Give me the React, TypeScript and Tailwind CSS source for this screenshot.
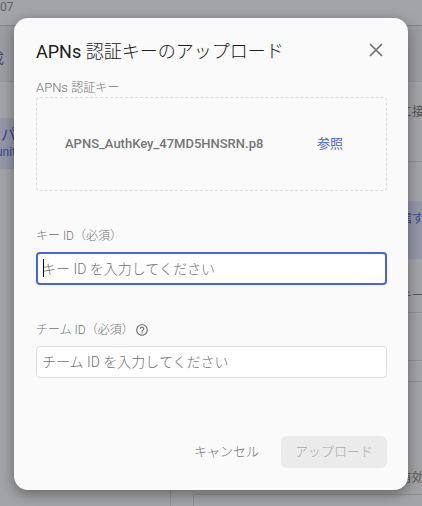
import { useState } from "react";

const input =
  "block w-full rounded-sm bg-white text-sm font-light text-[#202020] placeholder:text-[#707070] focus:outline-none";

function ConsolePage() {
  return (
    <div aria-hidden="true" className="flex h-screen flex-col overflow-hidden whitespace-nowrap bg-[#a3a4a7] text-xs text-[#555]">
      <header className="h-[26px] shrink-0 border-b border-[#858689] text-[#606164]">
        <span className="block leading-[14px]">07</span>
      </header>
      <div className="h-14 shrink-0 border-b border-[#949599] bg-[#9c9da3] pt-[22px]">
        <span className="flex w-1 justify-end text-sm leading-5 text-[#3c4266]">成</span>
      </div>
      <div className="flex min-h-0 flex-1">
        <aside className="w-[171px] shrink-0 border-r border-[#8f9093] pt-9">
          <div className="h-[51px] bg-[#9497a7] pt-2 text-[#3c4590]">
            <p className="flex w-4 justify-end text-[15px] leading-[18px]">ッパ</p>
            <p className="flex w-4 justify-end leading-4">unit</p>
          </div>
        </aside>
        <main className="min-w-0 flex-1">
          <div className="flex h-20 justify-end overflow-hidden border-b border-[#8f9093] pt-[22px]">
            <span className="-mr-0.5">に接</span>
          </div>
          <div className="h-[39px]" />
          <div className="flex h-[58px] justify-end overflow-hidden bg-[#9497a7] pt-2.5 text-xs text-[#3c4590]">
            <span className="-mr-0.5">信す</span>
          </div>
          <div className="flex h-[54px] justify-end overflow-hidden border-b border-[#8f9093] pt-[29px]">
            <span className="-mr-0.5">キー</span>
          </div>
          <div className="h-12 border-b border-[#8f9093]" />
          <div className="h-[21px] border-b border-[#8f9093]" />
          <div className="flex h-28 justify-end overflow-hidden pt-[88px]">
            <span className="-mr-0.5">有効</span>
          </div>
          <div className="ml-[22px] h-10 border-t border-l border-[#8f9093]" />
        </main>
      </div>
    </div>
  );
}

export default function App() {
  const [keyId, setKeyId] = useState("");
  const [teamId, setTeamId] = useState("");

  return (
    <div className="relative font-[Roboto,'Noto_Sans_CJK_JP',sans-serif]">
      <ConsolePage />
      <div className="absolute inset-0 flex items-start px-3.5 pt-[18px]">
        <section
          role="dialog"
          aria-modal="true"
          aria-labelledby="dialog-title"
          className="flex-1 rounded-[14px] bg-[#fafafa] pt-[18px] pr-[21px] pb-[22px] pl-[22px] text-[#757575] shadow-[0_4px_14px_rgba(0,0,0,0.4)]"
        >
          <header className="flex h-8 items-start justify-between">
            <h2 id="dialog-title" className="text-lg leading-8 text-[#202020]">
              <span className="font-normal">APNs</span> <span className="font-light">認証キーのアップロード</span>
            </h2>
            <button type="button" aria-label="閉じる" className="flex h-7 w-[22px] items-center justify-center">
              <svg viewBox="0 0 14 14" className="size-3.5" fill="none" stroke="#6e6e6e" strokeWidth="1.6">
                <path d="M1 1l12 12M13 1L1 13" />
              </svg>
            </button>
          </header>

          <p className="mt-2.5 h-[19px] text-[13px] leading-[19px] font-light">
            APNs <span className="text-xs">認証キー</span>
          </p>
          <div className="flex h-[94px] items-center rounded border border-dashed border-[#dcdcdc] pl-7">
            <span className="w-[252px] text-[13px] font-medium">APNS_AuthKey_47MD5HNSRN.p8</span>
            <button type="button" className="text-[13px] text-[#4863e6]">参照</button>
          </div>

          <label htmlFor="key-id" className="mt-[35px] block text-xs leading-5 font-light">キー ID（必須）</label>
          <div className="relative mt-1.5">
            <input
              id="key-id"
              value={keyId}
              onChange={(e) => setKeyId(e.target.value)}
              placeholder="キー ID を入力してください"
              className={`${input} h-[33px] border-2 border-[#4863df] px-1`}
            />
            <span className="absolute top-[7px] left-[7px] h-[18px] w-px bg-black" />
          </div>

          <div className="mt-[35px] flex h-5 items-center gap-px">
            <label htmlFor="team-id" className="text-xs leading-5 font-light">チーム ID（必須）</label>
            <svg viewBox="0 0 24 24" className="size-3.5" fill="#6e6e6e" role="img" aria-label="ヘルプ">
              <path d="M11 18h2v-2h-2v2zm1-16C6.48 2 2 6.48 2 12s4.48 10 10 10 10-4.48 10-10S17.52 2 12 2zm0 18c-4.41 0-8-3.59-8-8s3.59-8 8-8 8 3.59 8 8-3.59 8-8 8zm0-14c-2.21 0-4 1.79-4 4h2c0-1.1.9-2 2-2s2 .9 2 2c0 2-3 1.75-3 5h2c0-2.25 3-2.5 3-5 0-2.21-1.79-4-4-4z" />
            </svg>
          </div>
          <input
            id="team-id"
            value={teamId}
            onChange={(e) => setTeamId(e.target.value)}
            placeholder="チーム ID を入力してください"
            className={`${input} mt-1.5 h-8 border border-[#dfdfdf] px-[5px]`}
          />

          <footer className="mt-[58px] flex justify-end gap-1.5">
            <button type="button" className="h-8 px-4 text-[13px] font-light">キャンセル</button>
            <button type="button" disabled className="h-8 rounded-md bg-[#ebebeb] px-3.5 text-[13px] font-light text-[#aaa]">
              アップロード
            </button>
          </footer>
        </section>
      </div>
    </div>
  );
}
